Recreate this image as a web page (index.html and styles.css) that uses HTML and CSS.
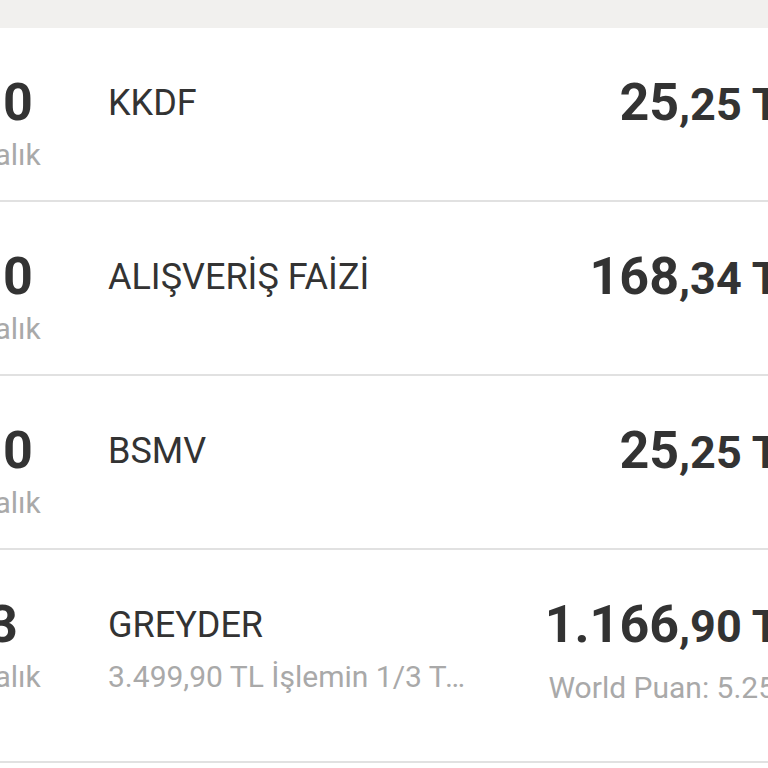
FILE: index.html
```html
<!DOCTYPE html>
<html lang="tr">
<head>
    <meta charset="UTF-8">
    <meta name="viewport" content="width=device-width, initial-scale=1.0">
    <title>Ekstre Hareketleri</title>
    <link rel="stylesheet" href="styles.css">
</head>
<body>

<div class="top-band"></div>

<div class="list">
    <div class="row">
        <div class="day">10</div>
        <div class="title">KKDF</div>
        <div class="amount"><span class="int">25</span><span class="dec">,25 TL</span></div>
        <div class="month">Aralık</div>
    </div>

    <div class="row">
        <div class="day">10</div>
        <div class="title">ALIŞVERİŞ FAİZİ</div>
        <div class="amount"><span class="int">168</span><span class="dec">,34 TL</span></div>
        <div class="month">Aralık</div>
    </div>

    <div class="row">
        <div class="day">10</div>
        <div class="title">BSMV</div>
        <div class="amount"><span class="int">25</span><span class="dec">,25 TL</span></div>
        <div class="month">Aralık</div>
    </div>

    <div class="row row-tall">
        <div class="day">3</div>
        <div class="title">GREYDER</div>
        <div class="amount"><span class="int">1.166</span><span class="dec">,90 TL</span></div>
        <div class="month">Aralık</div>
        <div class="subtitle">3.499,90 TL İşlemin 1/3 Taksiti</div>
        <div class="note">World Puan: 5.25 TL</div>
    </div>
</div>

</body>
</html>
```

FILE: styles.css
```css
html, body {
    margin: 0;
    padding: 0;
    overflow: hidden;
}

body {
    font-family: Roboto, "Noto Sans", Arial, sans-serif;
    background-color: #fff;
    color: #333;
}

.top-band {
    height: 28px;
    background-color: #f1f0ee; /* strip between the cards */
}

/* the list is wider than the screen, date and currency run off the edges */
.list {
    margin: 0 -36px 0 -47px;
}

.row {
    display: grid;
    grid-template-columns: 100px 358px 1fr;
    column-gap: 55px;
    align-items: start;
    padding: 44px 0 24px;
    border-bottom: 2px solid #e1e1e1;
}

.row-tall {
    padding-bottom: 52px;
}

.day {
    grid-column: 1;
    grid-row: 1;
    text-align: center;
    font-size: 52px;
    font-weight: 700;
    line-height: 62px;
}

.month {
    grid-column: 1;
    grid-row: 2;
    text-align: center;
    font-size: 30px;
    line-height: 42px;
    color: #a9a9a9;
    white-space: nowrap;
}

.title {
    grid-column: 2;
    grid-row: 1;
    align-self: center;
    font-size: 36px;
    line-height: 42px;
    white-space: nowrap;
}

.subtitle {
    grid-column: 2;
    grid-row: 2;
    font-size: 30px;
    line-height: 42px;
    color: #a9a9a9;
    white-space: nowrap;
    overflow: hidden;
    text-overflow: ellipsis;
}

.amount {
    grid-column: 3;
    grid-row: 1;
    text-align: right;
    font-size: 52px;
    font-weight: 700;
    line-height: 62px;
    white-space: nowrap;
}

.amount .dec {
    font-size: 45px;
    line-height: 1;
}

.note {
    grid-column: 3;
    grid-row: 2;
    margin: 11px -12px 0 0;
    text-align: right;
    font-size: 30px;
    line-height: 42px;
    color: #a9a9a9;
    white-space: nowrap;
}
```
